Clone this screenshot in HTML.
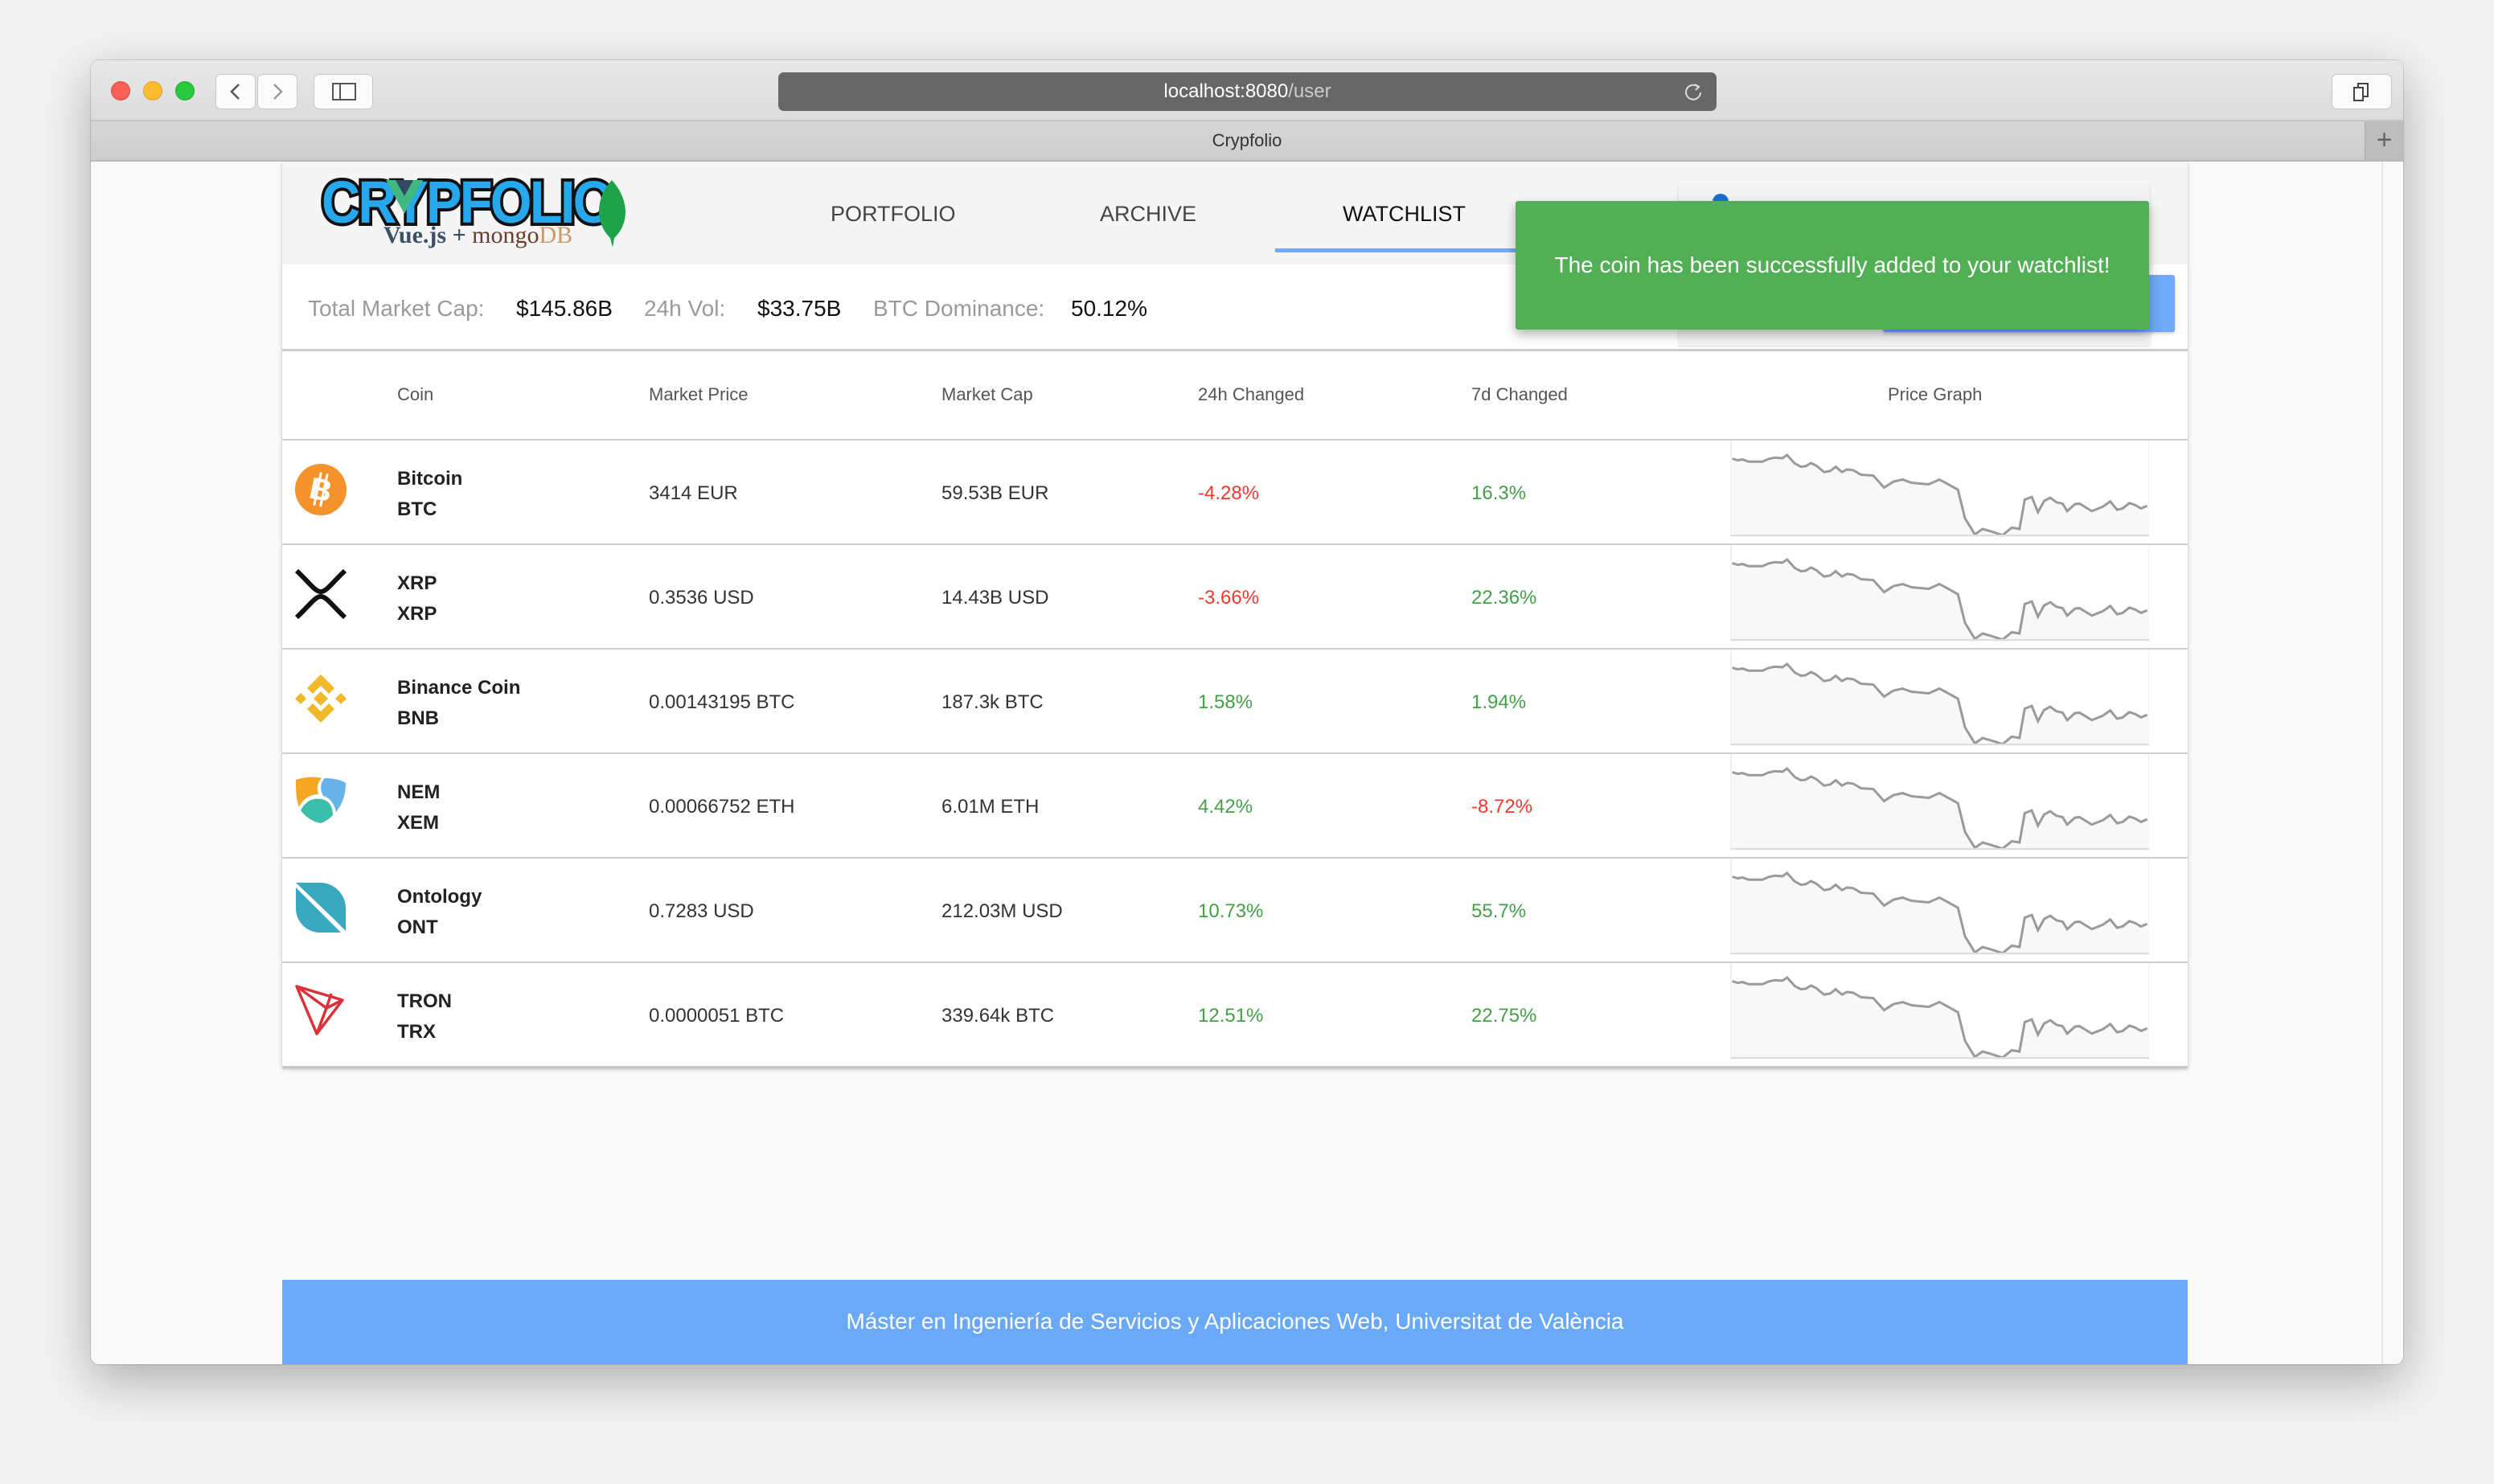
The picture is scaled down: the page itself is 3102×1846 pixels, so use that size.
<!DOCTYPE html>
<html><head><meta charset="utf-8"><style>
*{margin:0;padding:0;box-sizing:border-box}
body{width:3102px;height:1846px;background:#f1f1f1;font-family:"Liberation Sans",Arial,sans-serif;position:relative;overflow:hidden}
.a{position:absolute}
.win{left:113px;top:75px;width:2876px;height:1622px;background:#f9f9f9;border-radius:10px;overflow:hidden;box-shadow:0 20px 60px rgba(0,0,0,.28),0 0 0 1px rgba(0,0,0,.12)}
.tb{left:0;top:0;width:2876px;height:76px;background:linear-gradient(#e8e8e8,#dcdcdc);border-bottom:2px solid #c4c4c4}
.tab{left:0;top:76px;width:2876px;height:50px;background:linear-gradient(#d6d6d6,#cdcdcd);border-bottom:2px solid #b8b8b8}
.btn{background:#fbfbfb;border:1px solid #c8c8c8;border-radius:7px;height:44px}
.dot{width:24px;height:24px;border-radius:50%;top:26px}
.nav{font-size:27px;color:#444;top:251px}
.st{top:368px;font-size:28px}
.g{color:#9a9a9a}.v{color:#111}
.th{top:478px;font-size:22px;color:#555}
.row{left:0;width:2370px;height:130px;border-top:2px solid #d0d0d0}
.nm{font-size:24px;font-weight:bold;color:#222;left:143px}
.dt{font-size:24px;color:#333}
.red{color:#f0392b}.grn{color:#43a047}
</style></head><body>
<div class="a win">
 <div class="a tb">
  <div class="a dot" style="left:25px;background:#fc5f57;border:1px solid #de4a42"></div>
  <div class="a dot" style="left:65px;background:#fdbc2e;border:1px solid #dea124"></div>
  <div class="a dot" style="left:105px;background:#29c840;border:1px solid #1eaa30"></div>
  <div class="a btn" style="left:155px;top:17px;width:50px"></div>
  <div class="a btn" style="left:207px;top:17px;width:50px"></div>
  <svg class="a" style="left:155px;top:17px" width="102" height="44"><path d="M29 13 L20 22 L29 31" stroke="#555" stroke-width="2.5" fill="none"/><path d="M73 13 L82 22 L73 31" stroke="#999" stroke-width="2.5" fill="none"/></svg>
  <div class="a btn" style="left:277px;top:17px;width:74px"></div>
  <svg class="a" style="left:300px;top:28px" width="30" height="22"><rect x="1" y="1" width="28" height="20" fill="none" stroke="#555" stroke-width="2"/><line x1="10" y1="1" x2="10" y2="21" stroke="#555" stroke-width="2"/></svg>
  <div class="a" style="left:855px;top:15px;width:1167px;height:48px;background:#676767;border-radius:7px;color:#fff;font-size:24px;text-align:center;line-height:48px">localhost:8080<span style="color:#ccc">/user</span></div>
  <svg class="a" style="left:1980px;top:27px" width="26" height="26"><path d="M19 6 A9 9 0 1 0 22 13" stroke="#ddd" stroke-width="2" fill="none"/><path d="M15 3 L20 6 L16 10" stroke="#ddd" stroke-width="2" fill="none"/></svg>
  <div class="a btn" style="left:2787px;top:17px;width:75px"></div>
  <svg class="a" style="left:2812px;top:26px" width="26" height="26"><rect x="3" y="8" width="11" height="16" fill="none" stroke="#444" stroke-width="2"/><path d="M8 8 V3 H20 V19 H14" fill="none" stroke="#444" stroke-width="2"/></svg>
 </div>
 <div class="a tab">
  <div class="a" style="left:0;width:2876px;top:0;line-height:48px;text-align:center;font-size:22px;color:#333">Crypfolio</div>
  <div class="a" style="left:2828px;top:0;width:48px;height:48px;background:#bdbdbd;border-left:1px solid #aaa;color:#666;font-size:34px;text-align:center;line-height:46px">+</div>
 </div>
 <div class="a" style="left:2849px;top:126px;width:2px;height:1496px;background:#e6e6e6"></div>
</div>

<div class="a" style="left:351px;top:201px;width:2370px;height:1127px;background:#fff;box-shadow:0 2px 4px rgba(0,0,0,.25)"></div>
<div class="a" style="left:351px;top:201px;width:2370px;height:128px;background:#f5f5f5"></div>
<!-- logo -->
<div class="a" style="left:400px;top:212px;width:360px;height:80px;font-weight:bold;font-size:74px;color:#27a8ec;-webkit-text-stroke:8px #111;paint-order:stroke fill;letter-spacing:-3px;transform:scaleX(.9);transform-origin:left top;line-height:80px">CRYPFOLIO</div>
<svg class="a" style="left:478px;top:222px" width="50" height="46"><path d="M2 2 L25 44 L48 2 Z" fill="#3fb882"/><path d="M14 2 L25 22 L36 2 Z" fill="#35495e"/></svg>
<svg class="a" style="left:738px;top:222px" width="46" height="88"><path d="M23 2 C44 25 46 55 26 74 L24 86 L21 74 C2 55 2 25 23 2Z" fill="#1fa34a"/></svg>
<div class="a" style="left:477px;top:278px;font-size:30px;line-height:30px;font-family:'Liberation Serif',serif;white-space:nowrap"><b style="color:#3c5068">Vue.js +</b> <span style="color:#6b3b2c">mongo</span><span style="color:#c99a66">DB</span></div>
<div class="a nav" style="left:1033px">PORTFOLIO</div>
<div class="a nav" style="left:1368px">ARCHIVE</div>
<div class="a nav" style="left:1670px;color:#111">WATCHLIST</div>
<div class="a" style="left:1586px;top:309px;width:320px;height:5px;background:#74a9f5"></div>
<div class="a st g" style="left:383px">Total Market Cap:</div>
<div class="a st v" style="left:642px">$145.86B</div>
<div class="a st g" style="left:801px">24h Vol:</div>
<div class="a st v" style="left:942px">$33.75B</div>
<div class="a st g" style="left:1086px">BTC Dominance:</div>
<div class="a st v" style="left:1332px">50.12%</div>
<div class="a" style="left:351px;top:434px;width:2370px;height:3px;background:#ccc"></div>
<div class="a" style="left:2088px;top:230px;width:586px;height:200px;background:#f3f3f3;box-shadow:0 1px 3px rgba(0,0,0,.15)"></div>
<div class="a" style="left:2130px;top:241px;width:20px;height:20px;border-radius:50%;background:#1a6fd1"></div>
<div class="a" style="left:2342px;top:342px;width:363px;height:71px;background:#6eaaf7;border-radius:3px;box-shadow:0 2px 4px rgba(0,0,0,.2)"></div>
<div class="a" style="left:1885px;top:250px;width:788px;height:160px;background:#52af56;border-radius:3px;box-shadow:0 6px 14px rgba(0,0,0,.3);color:#fff;font-size:28px;text-align:center;line-height:160px">The coin has been successfully added to your watchlist!</div>
<div class="a th" style="left:494px">Coin</div>
<div class="a th" style="left:807px">Market Price</div>
<div class="a th" style="left:1171px">Market Cap</div>
<div class="a th" style="left:1490px">24h Changed</div>
<div class="a th" style="left:1830px">7d Changed</div>
<div class="a th" style="left:2348px">Price Graph</div>

<svg width="0" height="0" style="position:absolute"><defs>
<g id="sp">
<path d="M8 25 V380 H1366 V25" fill="none" stroke="#eee" stroke-width="2" vector-effect="non-scaling-stroke"/>
<path d="M12 92 L30 98 L45 95 L65 103 L110 103 L130 93 L150 88 L175 90 L190 78 L215 110 L235 122 L250 120 L268 108 L285 118 L310 142 L330 138 L348 122 L368 142 L385 132 L405 135 L430 152 L470 155 L505 200 L535 178 L565 170 L595 182 L650 188 L685 170 L720 192 L745 208 L768 315 L800 375 L825 355 L855 365 L890 378 L920 350 L945 355 L962 245 L985 235 L1005 292 L1025 250 L1045 238 L1065 255 L1085 260 L1100 288 L1125 262 L1140 260 L1180 288 L1215 272 L1240 252 L1262 283 L1280 278 L1302 258 L1320 265 L1340 278 L1360 268 L1366 268 L1366 378 L8 378 L8 92Z" fill="#f8f8f8"/>
<path d="M12 92 L30 98 L45 95 L65 103 L110 103 L130 93 L150 88 L175 90 L190 78 L215 110 L235 122 L250 120 L268 108 L285 118 L310 142 L330 138 L348 122 L368 142 L385 132 L405 135 L430 152 L470 155 L505 200 L535 178 L565 170 L595 182 L650 188 L685 170 L720 192 L745 208 L768 315 L800 375 L825 355 L855 365 L890 378 L920 350 L945 355 L962 245 L985 235 L1005 292 L1025 250 L1045 238 L1065 255 L1085 260 L1100 288 L1125 262 L1140 260 L1180 288 L1215 272 L1240 252 L1262 283 L1280 278 L1302 258 L1320 265 L1340 278 L1360 268" fill="none" stroke="#9a9a9a" stroke-width="3" vector-effect="non-scaling-stroke"/>
<line x1="8" y1="379" x2="1366" y2="379" stroke="#ddd" stroke-width="2" vector-effect="non-scaling-stroke"/>
</g></defs></svg>

<div class="a" style="left:351px;top:546px;width:2370px;height:782px">
 <div class="a row" style="top:0">
  <svg class="a" style="left:15px;top:28px" width="66" height="66"><circle cx="33" cy="33" r="32" fill="#f4922b"/><text x="33" y="46" font-size="38" font-weight="bold" fill="#fff" text-anchor="middle" font-family="Liberation Sans" transform="rotate(12 33 33)">B</text><line x1="29" y1="12" x2="29" y2="54" stroke="#fff" stroke-width="3" transform="rotate(12 33 33)"/><line x1="37" y1="12" x2="37" y2="54" stroke="#fff" stroke-width="3" transform="rotate(12 33 33)"/></svg>
  <div class="a nm" style="top:34px">Bitcoin</div><div class="a nm" style="top:72px">BTC</div>
  <div class="a dt" style="left:456px;top:52px">3414 EUR</div>
  <div class="a dt" style="left:820px;top:52px">59.53B EUR</div>
  <div class="a dt red" style="left:1139px;top:52px">-4.28%</div>
  <div class="a dt grn" style="left:1479px;top:52px">16.3%</div>
 </div>
 <div class="a row" style="top:130px">
  <svg class="a" style="left:15px;top:28px" width="66" height="66"><path d="M3 4 C20 20 26 30 33 30 C40 30 46 20 63 4" fill="none" stroke="#111" stroke-width="6"/><path d="M3 62 C20 46 26 36 33 36 C40 36 46 46 63 62" fill="none" stroke="#111" stroke-width="6"/></svg>
  <div class="a nm" style="top:34px">XRP</div><div class="a nm" style="top:72px">XRP</div>
  <div class="a dt" style="left:456px;top:52px">0.3536 USD</div>
  <div class="a dt" style="left:820px;top:52px">14.43B USD</div>
  <div class="a dt red" style="left:1139px;top:52px">-3.66%</div>
  <div class="a dt grn" style="left:1479px;top:52px">22.36%</div>
 </div>
 <div class="a row" style="top:260px">
  <svg class="a" style="left:15px;top:28px" width="66" height="66"><g fill="#f0b92a"><path d="M33 3 L50 20 L43 27 L33 17 L23 27 L16 20Z"/><path d="M33 63 L50 46 L43 39 L33 49 L23 39 L16 46Z"/><path d="M1 33 L8 26 L15 33 L8 40Z"/><path d="M65 33 L58 26 L51 33 L58 40Z"/><path d="M33 24 L42 33 L33 42 L24 33Z"/></g></svg>
  <div class="a nm" style="top:34px">Binance Coin</div><div class="a nm" style="top:72px">BNB</div>
  <div class="a dt" style="left:456px;top:52px">0.00143195 BTC</div>
  <div class="a dt" style="left:820px;top:52px">187.3k BTC</div>
  <div class="a dt grn" style="left:1139px;top:52px">1.58%</div>
  <div class="a dt grn" style="left:1479px;top:52px">1.94%</div>
 </div>
 <div class="a row" style="top:390px">
  <svg class="a" style="left:15px;top:26px" width="66" height="66"><path d="M2 6 C15 2 25 2 34 4 C28 10 28 18 30 24 C20 24 10 30 6 40 C2 30 2 18 2 6Z" fill="#f5a623"/><path d="M38 4 C48 4 58 6 64 10 C64 24 60 36 52 46 C50 36 44 28 36 26 C32 18 32 10 38 4Z" fill="#67b2e8"/><path d="M8 44 C14 32 24 28 34 30 C44 32 48 40 48 50 C42 56 38 58 33 60 C22 58 14 52 8 44Z" fill="#3cbfa8"/></svg>
  <div class="a nm" style="top:34px">NEM</div><div class="a nm" style="top:72px">XEM</div>
  <div class="a dt" style="left:456px;top:52px">0.00066752 ETH</div>
  <div class="a dt" style="left:820px;top:52px">6.01M ETH</div>
  <div class="a dt grn" style="left:1139px;top:52px">4.42%</div>
  <div class="a dt red" style="left:1479px;top:52px">-8.72%</div>
 </div>
 <div class="a row" style="top:520px">
  <svg class="a" style="left:15px;top:28px" width="66" height="66"><path d="M2 2 L48 46 L64 62 V34 A32 32 0 0 0 32 2 Z" fill="#3aa9c0"/><path d="M2 8 V34 A30 30 0 0 0 32 64 H58 Z" fill="#3aa9c0"/></svg>
  <div class="a nm" style="top:34px">Ontology</div><div class="a nm" style="top:72px">ONT</div>
  <div class="a dt" style="left:456px;top:52px">0.7283 USD</div>
  <div class="a dt" style="left:820px;top:52px">212.03M USD</div>
  <div class="a dt grn" style="left:1139px;top:52px">10.73%</div>
  <div class="a dt grn" style="left:1479px;top:52px">55.7%</div>
 </div>
 <div class="a row" style="top:650px;border-bottom:3px solid #c8c8c8;height:133px">
  <svg class="a" style="left:15px;top:26px" width="66" height="66"><g fill="none" stroke="#d9323a" stroke-width="3.5" stroke-linejoin="round"><path d="M3 3 L60 20 L28 62 Z"/><path d="M3 3 L40 30 L60 20"/><path d="M40 30 L28 62"/><path d="M46 12 L40 30"/></g></svg>
  <div class="a nm" style="top:34px">TRON</div><div class="a nm" style="top:72px">TRX</div>
  <div class="a dt" style="left:456px;top:52px">0.0000051 BTC</div>
  <div class="a dt" style="left:820px;top:52px">339.64k BTC</div>
  <div class="a dt grn" style="left:1139px;top:52px">12.51%</div>
  <div class="a dt grn" style="left:1479px;top:52px">22.75%</div>
 </div>
</div>
<svg class="a" style="left:2150px;top:540px" width="523" height="133" viewBox="0 0 1366 400" preserveAspectRatio="none"><use href="#sp"/></svg>
<svg class="a" style="left:2150px;top:670px" width="523" height="133" viewBox="0 0 1366 400" preserveAspectRatio="none"><use href="#sp"/></svg>
<svg class="a" style="left:2150px;top:800px" width="523" height="133" viewBox="0 0 1366 400" preserveAspectRatio="none"><use href="#sp"/></svg>
<svg class="a" style="left:2150px;top:930px" width="523" height="133" viewBox="0 0 1366 400" preserveAspectRatio="none"><use href="#sp"/></svg>
<svg class="a" style="left:2150px;top:1060px" width="523" height="133" viewBox="0 0 1366 400" preserveAspectRatio="none"><use href="#sp"/></svg>
<svg class="a" style="left:2150px;top:1190px" width="523" height="133" viewBox="0 0 1366 400" preserveAspectRatio="none"><use href="#sp"/></svg>

<div class="a" style="left:351px;top:1592px;width:2370px;height:105px;background:#6aa9f8;color:#fff;font-size:28px;text-align:center;line-height:104px">Máster en Ingeniería de Servicios y Aplicaciones Web, Universitat de València</div>
</body></html>
